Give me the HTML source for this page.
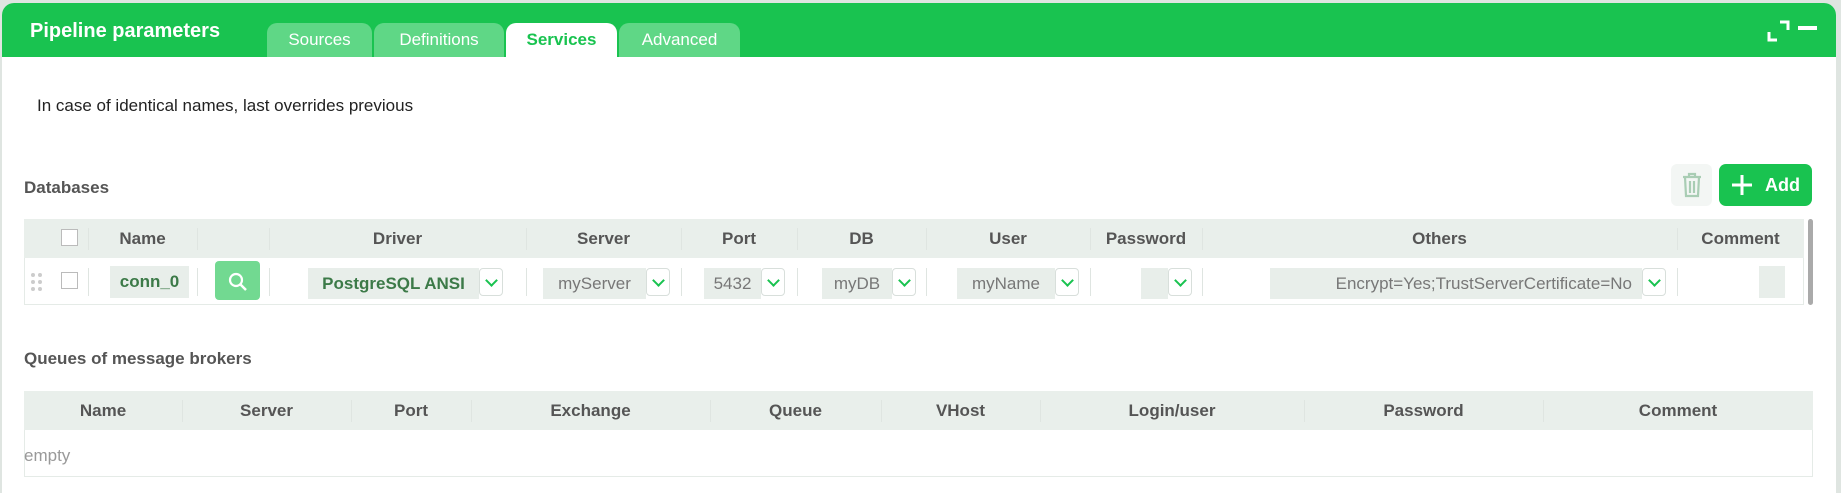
<!DOCTYPE html>
<html><head><meta charset="utf-8"><style>
*{box-sizing:border-box;margin:0;padding:0}
body{width:1841px;height:488px;background:#dfe5e1;font-family:"Liberation Sans",sans-serif;position:relative;overflow:hidden}
.a{position:absolute}
.card{left:2px;top:3px;width:1834px;height:490px;background:#fff;border-radius:12px 12px 0 0;overflow:hidden}
.hdr{left:0;top:0;width:1834px;height:54px;background:#19c350}
.tab{top:20px;height:34px;background:#5fd786;color:#fff;font-size:17px;text-align:center;line-height:34px;border-radius:10px 10px 0 0}
.th{background:#e9efeb;color:#555;font-weight:bold;font-size:17px}
.c{position:absolute;top:0;height:100%;display:flex;align-items:center;justify-content:center}
.sep{position:absolute;width:1px;background:#dfe5e1}
.inp{position:absolute;background:#e8eeea;font-size:17px;display:flex;align-items:center;justify-content:center}
.dd{position:absolute;width:24px;height:28px;border:1px solid #d8dfdb;border-radius:4px;background:#fff}
.dd:after{content:"";position:absolute;left:7px;top:7px;width:7px;height:7px;border-right:2px solid #19c350;border-bottom:2px solid #19c350;transform:rotate(45deg)}
.cb{position:absolute;width:17px;height:17px;border:1px solid #bbb;background:#fff}
</style></head><body>
<div class="a card">
 <div class="a hdr"></div>
 <div class="a" style="left:28px;top:17px;color:#fff;font-weight:bold;font-size:20px">Pipeline parameters</div>
 <div class="a tab" style="left:265px;width:105px">Sources</div>
 <div class="a tab" style="left:372px;width:130px">Definitions</div>
 <div class="a tab" style="left:504px;width:111px;background:#fff;color:#19c350;font-weight:bold">Services</div>
 <div class="a tab" style="left:617px;width:121px">Advanced</div>
 <svg class="a" style="left:1763px;top:15px" width="60" height="26"><path d="M4 14v8h8M15 4h8v8" stroke="#fff" stroke-width="3" fill="none"/><rect x="33" y="8" width="19" height="4" fill="#fff"/></svg>
 <div class="a" style="left:35px;top:93px;font-size:17px;color:#222">In case of identical names, last overrides previous</div>
 <div class="a" style="left:22px;top:175px;font-size:17px;font-weight:bold;color:#555">Databases</div>
 <div class="a" style="left:1669px;top:161px;width:41px;height:42px;background:#f3f6f4;border-radius:6px"></div>
 <svg class="a" style="left:1678px;top:168px" width="24" height="28"><path d="M3 6h18M9 6V3h6v3M5 6l1 19h12l1-19M10 10v12M14 10v12" stroke="#a9cdb4" stroke-width="2.2" fill="none"/></svg>
 <div class="a" style="left:1717px;top:161px;width:93px;height:42px;background:#19c350;border-radius:7px;color:#fff;font-weight:bold;font-size:18px;line-height:42px;padding-left:46px">Add</div>
 <svg class="a" style="left:1729px;top:171px" width="22" height="22"><path d="M11 1v20M1 11h20" stroke="#fff" stroke-width="3"/></svg>
</div>
<!-- db table -->
<div class="a" style="left:24px;top:219px;width:1780px;height:86px;border:1px solid #e5ebe7;border-top:none"></div>
<div class="a th" style="left:24px;top:219px;width:1780px;height:39px">
 <div class="cb" style="left:37px;top:10px"></div>
 <div class="c" style="left:64px;width:109px">Name</div>
 <div class="c" style="left:245px;width:257px">Driver</div>
 <div class="c" style="left:502px;width:155px">Server</div>
 <div class="c" style="left:657px;width:116px">Port</div>
 <div class="c" style="left:773px;width:129px">DB</div>
 <div class="c" style="left:902px;width:164px">User</div>
 <div class="c" style="left:1066px;width:112px">Password</div>
 <div class="c" style="left:1178px;width:475px">Others</div>
 <div class="c" style="left:1653px;width:127px">Comment</div>
</div>
<div class="sep" style="left:88px;top:228px;height:22px"></div><div class="sep" style="left:197px;top:228px;height:22px"></div><div class="sep" style="left:269px;top:228px;height:22px"></div><div class="sep" style="left:526px;top:228px;height:22px"></div><div class="sep" style="left:681px;top:228px;height:22px"></div><div class="sep" style="left:797px;top:228px;height:22px"></div><div class="sep" style="left:926px;top:228px;height:22px"></div><div class="sep" style="left:1090px;top:228px;height:22px"></div><div class="sep" style="left:1202px;top:228px;height:22px"></div><div class="sep" style="left:1677px;top:228px;height:22px"></div>
<div class="sep" style="left:88px;top:268px;height:28px"></div><div class="sep" style="left:197px;top:268px;height:28px"></div><div class="sep" style="left:269px;top:268px;height:28px"></div><div class="sep" style="left:526px;top:268px;height:28px"></div><div class="sep" style="left:681px;top:268px;height:28px"></div><div class="sep" style="left:797px;top:268px;height:28px"></div><div class="sep" style="left:926px;top:268px;height:28px"></div><div class="sep" style="left:1090px;top:268px;height:28px"></div><div class="sep" style="left:1202px;top:268px;height:28px"></div><div class="sep" style="left:1677px;top:268px;height:28px"></div>
<svg class="a" style="left:30px;top:272px" width="14" height="20"><g fill="#ccc"><circle cx="3" cy="3" r="2"/><circle cx="10" cy="3" r="2"/><circle cx="3" cy="10" r="2"/><circle cx="10" cy="10" r="2"/><circle cx="3" cy="17" r="2"/><circle cx="10" cy="17" r="2"/></g></svg>
<div class="cb" style="left:61px;top:272px"></div>
<div class="inp" style="left:110px;top:266px;width:79px;height:32px;color:#3c7a48;font-weight:bold">conn_0</div>
<div class="a" style="left:215px;top:261px;width:45px;height:39px;background:#72d991;border-radius:4px"></div>
<svg class="a" style="left:227px;top:271px" width="22" height="22"><circle cx="9" cy="9" r="6" stroke="#fff" stroke-width="2.2" fill="none"/><path d="M13 13l6 6" stroke="#fff" stroke-width="2.5"/></svg>
<div class="inp" style="left:308px;top:268px;width:171px;height:31px;color:#3c7a48;font-weight:bold">PostgreSQL ANSI</div><div class="dd" style="left:479px;top:268px"></div>
<div class="inp" style="left:543px;top:268px;width:103px;height:31px;color:#777">myServer</div><div class="dd" style="left:646px;top:268px"></div>
<div class="inp" style="left:704px;top:268px;width:57px;height:31px;color:#777">5432</div><div class="dd" style="left:761px;top:268px"></div>
<div class="inp" style="left:822px;top:268px;width:70px;height:31px;color:#777">myDB</div><div class="dd" style="left:892px;top:268px"></div>
<div class="inp" style="left:957px;top:268px;width:98px;height:31px;color:#777">myName</div><div class="dd" style="left:1055px;top:268px"></div>
<div class="inp" style="left:1141px;top:268px;width:27px;height:31px"></div><div class="dd" style="left:1168px;top:268px"></div>
<div class="inp" style="left:1270px;top:268px;width:372px;height:31px;color:#777;justify-content:flex-end;padding-right:10px">Encrypt=Yes;TrustServerCertificate=No</div><div class="dd" style="left:1642px;top:268px"></div>
<div class="inp" style="left:1759px;top:266px;width:26px;height:32px"></div>
<div class="a" style="left:1808px;top:219px;width:5px;height:86px;background:#aaa;border-radius:3px"></div>
<!-- queues -->
<div class="a" style="left:24px;top:349px;font-size:17px;font-weight:bold;color:#555">Queues of message brokers</div>
<div class="a" style="left:24px;top:391px;width:1789px;height:86px;border:1px solid #e5ebe7;border-top:none"></div>
<div class="a th" style="left:24px;top:391px;width:1789px;height:39px">
 <div class="c" style="left:0;width:158px">Name</div>
 <div class="c" style="left:158px;width:169px">Server</div>
 <div class="c" style="left:327px;width:120px">Port</div>
 <div class="c" style="left:447px;width:239px">Exchange</div>
 <div class="c" style="left:686px;width:171px">Queue</div>
 <div class="c" style="left:857px;width:159px">VHost</div>
 <div class="c" style="left:1016px;width:264px">Login/user</div>
 <div class="c" style="left:1280px;width:239px">Password</div>
 <div class="c" style="left:1519px;width:270px">Comment</div>
</div>
<div class="sep" style="left:182px;top:400px;height:22px"></div><div class="sep" style="left:351px;top:400px;height:22px"></div><div class="sep" style="left:471px;top:400px;height:22px"></div><div class="sep" style="left:710px;top:400px;height:22px"></div><div class="sep" style="left:881px;top:400px;height:22px"></div><div class="sep" style="left:1040px;top:400px;height:22px"></div><div class="sep" style="left:1304px;top:400px;height:22px"></div><div class="sep" style="left:1543px;top:400px;height:22px"></div>
<div class="a" style="left:24px;top:446px;font-size:17px;color:#999">empty</div>
</body></html>
